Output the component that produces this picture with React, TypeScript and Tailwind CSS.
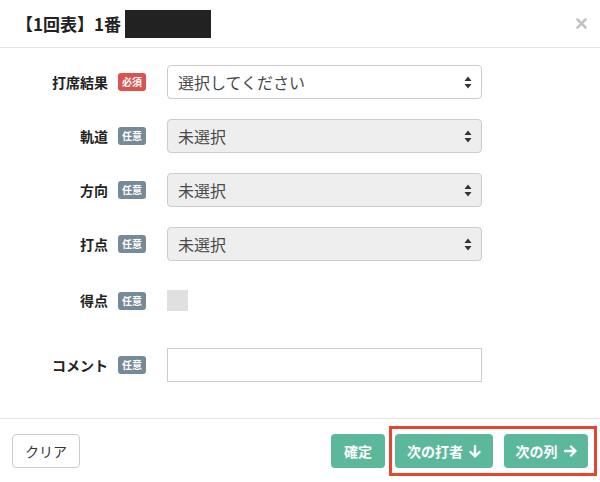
import React from 'react';

const font = { fontFamily: '"Noto Sans CJK JP", "Noto Sans", sans-serif' };

const Badge: React.FC<{ required?: boolean }> = ({ required }) => (
  <span
    className={`inline-flex items-center justify-center w-[28px] h-[18px] rounded-[3px] text-[10px] font-bold leading-none text-white ${
      required ? 'bg-[#d9534f]' : 'bg-[#778a98]'
    }`}
  >
    {required ? '必須' : '任意'}
  </span>
);

const Label: React.FC<{ text: string; required?: boolean }> = ({ text, required }) => (
  <div className="w-[167px] shrink-0 flex items-center justify-end gap-[10px] pr-[21px]">
    <span className="text-[14px] font-bold text-[#222]">{text}</span>
    <Badge required={required} />
  </div>
);

const Arrows = () => (
  <svg width="8" height="13" viewBox="0 0 8 13" className="text-[#333]">
    <path d="M4 0.5 L7.5 5 L0.5 5 Z" fill="currentColor" />
    <path d="M4 12.5 L7.5 8 L0.5 8 Z" fill="currentColor" />
  </svg>
);

const Select: React.FC<{ value: string; disabled?: boolean }> = ({ value, disabled }) => (
  <div
    className={`w-[315px] h-[34px] rounded-[4px] border border-[#ccc] flex items-center justify-between pl-[10px] pr-[9px] ${
      disabled ? 'bg-[#eeeeee]' : 'bg-white'
    }`}
  >
    <span className="text-[16px] text-[#4a4a4a]">{value}</span>
    <Arrows />
  </div>
);

export default function App() {
  return (
    <div className="w-[600px] h-[482px] bg-white overflow-hidden" style={font}>
      <div className="h-[48px] border-b border-[#e5e5e5] flex items-center justify-between pl-[16px] pr-[12px]">
        <div className="flex items-center">
          <span className="text-[17px] font-bold text-[#222]">【1回表】1番</span>
          <span className="ml-[4px] w-[86px] h-[28px] bg-[#222]" />
        </div>
        <svg width="11" height="11" viewBox="0 0 11 11" className="mr-[1px]">
          <path d="M1.5 1.5 L9.5 9.5 M9.5 1.5 L1.5 9.5" stroke="#c4c4c4" strokeWidth="2.6" strokeLinecap="round" />
        </svg>
      </div>

      <div className="pt-[17px] h-[371px] border-b border-[#e5e5e5]">
        <div className="flex flex-col gap-[20px]">
          <div className="flex items-center">
            <Label text="打席結果" required />
            <Select value="選択してください" />
          </div>
          <div className="flex items-center">
            <Label text="軌道" />
            <Select value="未選択" disabled />
          </div>
          <div className="flex items-center">
            <Label text="方向" />
            <Select value="未選択" disabled />
          </div>
          <div className="flex items-center">
            <Label text="打点" />
            <Select value="未選択" disabled />
          </div>
        </div>
        <div className="flex items-center mt-[29px]">
          <Label text="得点" />
          <div className="w-[21px] h-[21px] bg-[#e0e0e0]" />
        </div>
        <div className="flex items-center mt-[37px]">
          <Label text="コメント" />
          <div className="w-[315px] h-[34px] border border-[#ccc] bg-white" />
        </div>
      </div>

      <div className="flex items-center justify-between pl-[12px] pr-[3px] pt-[7px]">
        <button className="w-[68px] h-[34px] rounded-[4px] border border-[#ccc] bg-white text-[14px] text-[#333]">
          クリア
        </button>
        <div className="flex items-center gap-[4px]">
          <button className="w-[54px] h-[34px] rounded-[4px] bg-[#5cb89b] text-[14px] font-bold text-white">
            確定
          </button>
          <div className="border-[3px] border-[#e8452e] pl-[3px] pr-[6px] py-[5px] flex gap-[11px]">
            <button className="w-[98px] h-[34px] rounded-[4px] bg-[#5cb89b] text-[14px] font-bold text-white flex items-center justify-center gap-[6px]">
              次の打者
              <svg width="12" height="13" viewBox="0 0 12 13">
                <path d="M6 1 V11 M1.5 7 L6 11.5 L10.5 7" stroke="white" strokeWidth="2.4" fill="none" strokeLinecap="round" strokeLinejoin="round" />
              </svg>
            </button>
            <button className="w-[84px] h-[34px] rounded-[4px] bg-[#5cb89b] text-[14px] font-bold text-white flex items-center justify-center gap-[6px]">
              次の列
              <svg width="13" height="12" viewBox="0 0 13 12">
                <path d="M1 6 H11 M7 1.5 L11.5 6 L7 10.5" stroke="white" strokeWidth="2.4" fill="none" strokeLinecap="round" strokeLinejoin="round" />
              </svg>
            </button>
          </div>
        </div>
      </div>
    </div>
  );
}
